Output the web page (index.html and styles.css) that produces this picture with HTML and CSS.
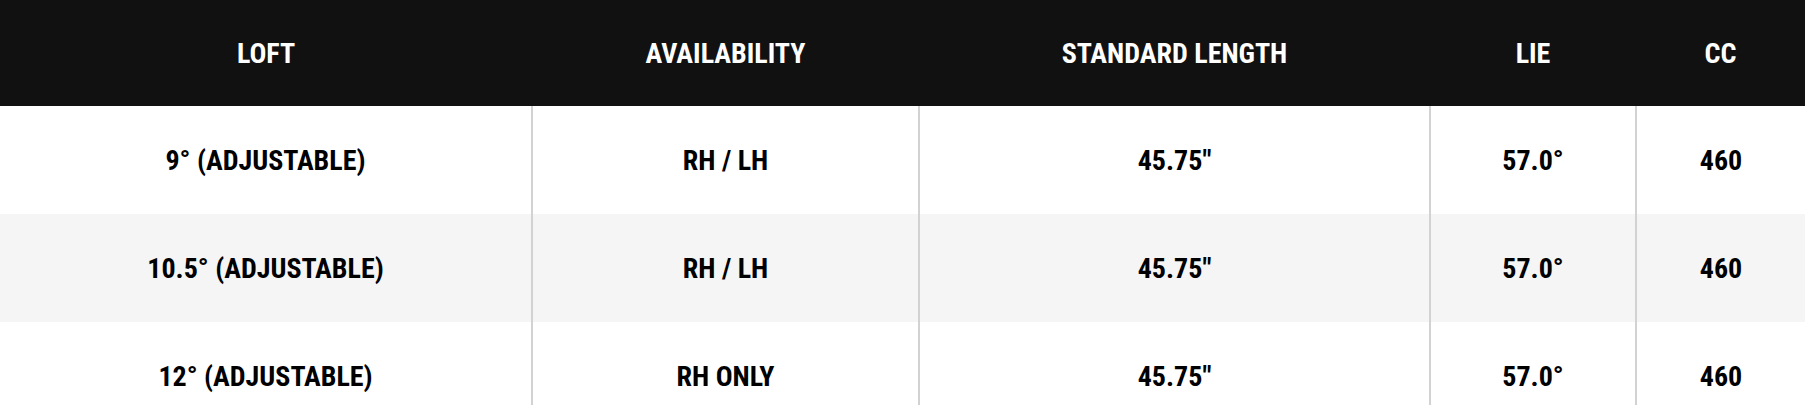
FILE: index.html
```html
<!DOCTYPE html>
<html lang="en">
<head>
<meta charset="utf-8">
<link rel="stylesheet" href="styles.css">
<title>Specs</title>
</head>
<body>
<table class="specs">
  <colgroup>
    <col class="c1"><col class="c2"><col class="c3"><col class="c4"><col class="c5">
  </colgroup>
  <thead>
    <tr><th>LOFT</th><th>AVAILABILITY</th><th>STANDARD LENGTH</th><th>LIE</th><th>CC</th></tr>
  </thead>
  <tbody>
    <tr><td>9° (ADJUSTABLE)</td><td>RH / LH</td><td>45.75"</td><td>57.0°</td><td>460</td></tr>
    <tr><td>10.5° (ADJUSTABLE)</td><td>RH / LH</td><td>45.75"</td><td>57.0°</td><td>460</td></tr>
    <tr><td>12° (ADJUSTABLE)</td><td>RH ONLY</td><td>45.75"</td><td>57.0°</td><td>460</td></tr>
  </tbody>
</table>
</body>
</html>
```
FILE: styles.css
```css
html, body {
  margin: 0;
  padding: 0;
  background: #fff;
}
.specs {
  width: 1805px;
  border-collapse: collapse;
  table-layout: fixed;
  font-family: "Roboto Condensed", "Liberation Sans Narrow", Roboto, sans-serif;
  font-stretch: condensed;
  font-weight: 700;
  font-size: 28px;
  color: #000;
}
.c1 { width: 532px; }
.c2 { width: 387px; }
.c3 { width: 511px; }
.c4 { width: 206px; }
.c5 { width: 169px; }
.specs th {
  background: #111;
  color: #fff;
  height: 106px;
  padding: 0;
  text-align: center;
  vertical-align: middle;
  font-weight: 700;
}
.specs td {
  height: 108px;
  padding: 0;
  text-align: center;
  vertical-align: middle;
  border-left: 2px solid #d2d2d2;
}
.specs td:first-child { border-left: none; }
.specs tbody tr:nth-child(even) td { background: #f5f5f5; }
```
